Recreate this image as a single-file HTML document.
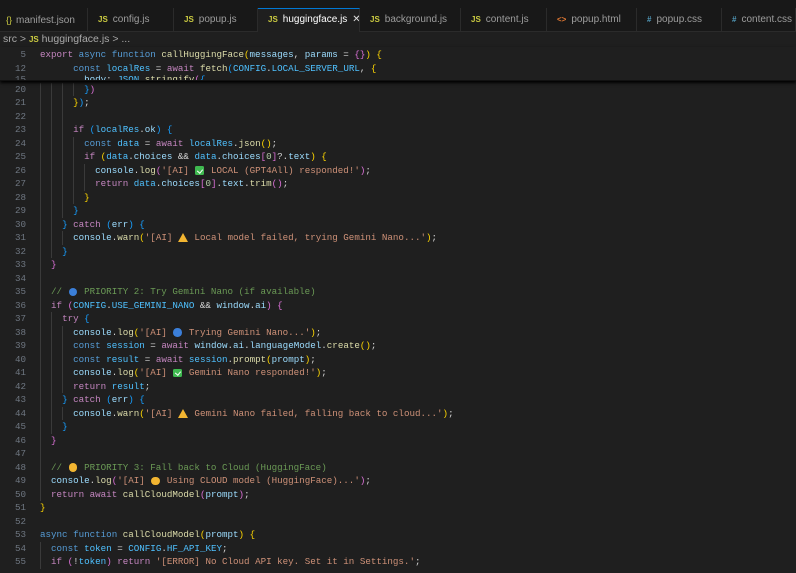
<!DOCTYPE html>
<html><head><meta charset="utf-8"><style>
*{margin:0;padding:0;box-sizing:border-box}
body{width:796px;height:573px;background:#1f1f1f;overflow:hidden;position:relative;font-family:"Liberation Sans",sans-serif}
.top{position:absolute;left:0;top:0;width:796px;height:8px;background:#181818}
.tabs{position:absolute;left:0;top:8px;width:796px;height:24px;background:#181818;border-bottom:1px solid #2b2b2b}
.tab{position:absolute;top:0;height:24px;border-right:1px solid #2b2b2b;color:#9d9d9d;font-size:10px;line-height:24px;padding-left:6px;white-space:nowrap;overflow:hidden}
.tab.act{background:#1f1f1f;color:#fff;border-top:1px solid #0078d4;line-height:22px}
.ic{font-weight:bold;font-size:8px;margin-right:5px}
.js{color:#cbcb41}.css{color:#519aba}.htm{color:#e37933}
.bc{position:absolute;left:0;top:32px;height:15px;line-height:15px;font-size:10.5px;color:#a9a9a9;padding-left:3px}
.code{font-family:"Liberation Mono",monospace;font-size:9.2px;white-space:pre;color:#d4d4d4}
.ln{position:absolute;left:0;width:26px;text-align:right;color:#6e7681;font-family:"Liberation Mono",monospace;font-size:9.2px;height:13.5px;line-height:13.5px}
.l{position:absolute;left:40px;height:13.5px;line-height:13.5px}
.sticky{position:absolute;left:0;top:47px;width:796px;height:34px;background:#1f1f1f;overflow:hidden;z-index:2;box-shadow:0 2px 3px #000;border-bottom:1px solid #111}
i{display:inline-block;width:11.04px;height:13.5px;vertical-align:top;border-left:1px solid #3a3a3a;font-style:normal}
.k{color:#569cd6}.c{color:#c586c0}.f{color:#dcdcaa}.v{color:#9cdcfe}.s{color:#ce9178}.cm{color:#6a9955}.C{color:#4fc1ff}.n{color:#b5cea8}
.b1{color:#ffd700}.b2{color:#da70d6}.b3{color:#179fff}
.e{display:inline-block;width:11.04px;height:13.5px;vertical-align:top;position:relative}
.e::after{content:"";position:absolute;left:1px;top:2.5px;width:8.5px;height:8.5px;border-radius:50%}
.bl::after{background:#3b7fd9}.yl::after{background:#f2b531}
.gr::after{background:#3fb950;border-radius:1.5px}
.gr::before{content:"";position:absolute;left:3.5px;top:4px;width:2.5px;height:4px;border:solid #fff;border-width:0 1.3px 1.3px 0;transform:rotate(40deg);z-index:1}
.wr::after{width:0;height:0;border-radius:0;border-left:5px solid transparent;border-right:5px solid transparent;border-bottom:9px solid #f2b531;left:0;top:2px}
</style></head><body>
<div class="top"></div>
<div class="tabs">
<div class="tab" style="left:0;width:88px"><span style="color:#cbcb41;font-size:9px;margin-right:4px">{}</span>manifest.json</div>
<div class="tab" style="left:88px;width:86px;padding-left:10px"><span class="ic js">JS</span>config.js</div>
<div class="tab" style="left:174px;width:84px;padding-left:10px"><span class="ic js">JS</span>popup.js</div>
<div class="tab act" style="left:258px;width:102px;padding-left:10px"><span class="ic js">JS</span>huggingface.js<span style="margin-left:5px;color:#ddd">✕</span></div>
<div class="tab" style="left:360px;width:101px;padding-left:10px"><span class="ic js">JS</span>background.js</div>
<div class="tab" style="left:461px;width:86px;padding-left:10px"><span class="ic js">JS</span>content.js</div>
<div class="tab" style="left:547px;width:90px;padding-left:10px"><span class="ic htm">&lt;&gt;</span>popup.html</div>
<div class="tab" style="left:637px;width:85px;padding-left:10px"><span class="ic css">#</span>popup.css</div>
<div class="tab" style="left:722px;width:74px;padding-left:10px"><span class="ic css">#</span>content.css</div>
</div>
<div class="bc">src &gt; <span class="js" style="font-weight:bold;font-size:8px">JS</span> huggingface.js &gt; ...</div>

<div class="sticky">
<div class="ln" style="top:1px">5</div><div class="l code" style="top:1px"><span class="c">export</span> <span class="k">async</span> <span class="k">function</span> <span class="f">callHuggingFace</span><span class="b1">(</span><span class="v">messages</span>, <span class="v">params</span> = <span class="b2">{}</span><span class="b1">)</span> <span class="b1">{</span></div>
<div class="ln" style="top:14.5px">12</div><div class="l code" style="top:14.5px">      <span class="k">const</span> <span class="C">localRes</span> = <span class="c">await</span> <span class="f">fetch</span><span class="b3">(</span><span class="C">CONFIG</span>.<span class="C">LOCAL_SERVER_URL</span>, <span class="b1">{</span></div>
<div class="ln" style="top:26px">15</div><div class="l code" style="top:26px">        <span class="v">body</span>: <span class="C">JSON</span>.<span class="f">stringify</span><span class="b2">(</span><span class="b3">{</span></div>
</div>

<div class="code">
<div class="ln" style="top:82.5px">20</div><div class="l" style="top:82.5px"><i></i><i></i><i></i><i></i><span class="b3">}</span><span class="b2">)</span></div>
<div class="ln" style="top:96px">21</div><div class="l" style="top:96px"><i></i><i></i><i></i><span class="b1">}</span><span class="b3">)</span>;</div>
<div class="ln" style="top:109.5px">22</div><div class="l" style="top:109.5px"><i></i><i></i><i></i></div>
<div class="ln" style="top:123px">23</div><div class="l" style="top:123px"><i></i><i></i><i></i><span class="c">if</span> <span class="b3">(</span><span class="C">localRes</span>.<span class="v">ok</span><span class="b3">)</span> <span class="b3">{</span></div>
<div class="ln" style="top:136.5px">24</div><div class="l" style="top:136.5px"><i></i><i></i><i></i><i></i><span class="k">const</span> <span class="C">data</span> = <span class="c">await</span> <span class="C">localRes</span>.<span class="f">json</span><span class="b1">()</span>;</div>
<div class="ln" style="top:150px">25</div><div class="l" style="top:150px"><i></i><i></i><i></i><i></i><span class="c">if</span> <span class="b1">(</span><span class="C">data</span>.<span class="v">choices</span> &amp;&amp; <span class="C">data</span>.<span class="v">choices</span><span class="b2">[</span><span class="n">0</span><span class="b2">]</span>?.<span class="v">text</span><span class="b1">)</span> <span class="b1">{</span></div>
<div class="ln" style="top:163.5px">26</div><div class="l" style="top:163.5px"><i></i><i></i><i></i><i></i><i></i><span class="v">console</span>.<span class="f">log</span><span class="b2">(</span><span class="s">'[AI] <span class="e gr"></span> LOCAL (GPT4All) responded!'</span><span class="b2">)</span>;</div>
<div class="ln" style="top:177px">27</div><div class="l" style="top:177px"><i></i><i></i><i></i><i></i><i></i><span class="c">return</span> <span class="C">data</span>.<span class="v">choices</span><span class="b2">[</span><span class="n">0</span><span class="b2">]</span>.<span class="v">text</span>.<span class="f">trim</span><span class="b2">()</span>;</div>
<div class="ln" style="top:190.5px">28</div><div class="l" style="top:190.5px"><i></i><i></i><i></i><i></i><span class="b1">}</span></div>
<div class="ln" style="top:204px">29</div><div class="l" style="top:204px"><i></i><i></i><i></i><span class="b3">}</span></div>
<div class="ln" style="top:217.5px">30</div><div class="l" style="top:217.5px"><i></i><i></i><span class="b3">}</span> <span class="c">catch</span> <span class="b3">(</span><span class="v">err</span><span class="b3">)</span> <span class="b3">{</span></div>
<div class="ln" style="top:231px">31</div><div class="l" style="top:231px"><i></i><i></i><i></i><span class="v">console</span>.<span class="f">warn</span><span class="b1">(</span><span class="s">'[AI] <span class="e wr"></span> Local model failed, trying Gemini Nano...'</span><span class="b1">)</span>;</div>
<div class="ln" style="top:244.5px">32</div><div class="l" style="top:244.5px"><i></i><i></i><span class="b3">}</span></div>
<div class="ln" style="top:258px">33</div><div class="l" style="top:258px"><i></i><span class="b2">}</span></div>
<div class="ln" style="top:271.5px">34</div><div class="l" style="top:271.5px"><i></i></div>
<div class="ln" style="top:285px">35</div><div class="l" style="top:285px"><i></i><span class="cm">// <span class="e bl"></span> PRIORITY 2: Try Gemini Nano (if available)</span></div>
<div class="ln" style="top:298.5px">36</div><div class="l" style="top:298.5px"><i></i><span class="c">if</span> <span class="b2">(</span><span class="C">CONFIG</span>.<span class="C">USE_GEMINI_NANO</span> &amp;&amp; <span class="v">window</span>.<span class="v">ai</span><span class="b2">)</span> <span class="b2">{</span></div>
<div class="ln" style="top:312px">37</div><div class="l" style="top:312px"><i></i><i></i><span class="c">try</span> <span class="b3">{</span></div>
<div class="ln" style="top:325.5px">38</div><div class="l" style="top:325.5px"><i></i><i></i><i></i><span class="v">console</span>.<span class="f">log</span><span class="b1">(</span><span class="s">'[AI] <span class="e bl"></span> Trying Gemini Nano...'</span><span class="b1">)</span>;</div>
<div class="ln" style="top:339px">39</div><div class="l" style="top:339px"><i></i><i></i><i></i><span class="k">const</span> <span class="C">session</span> = <span class="c">await</span> <span class="v">window</span>.<span class="v">ai</span>.<span class="v">languageModel</span>.<span class="f">create</span><span class="b1">()</span>;</div>
<div class="ln" style="top:352.5px">40</div><div class="l" style="top:352.5px"><i></i><i></i><i></i><span class="k">const</span> <span class="C">result</span> = <span class="c">await</span> <span class="C">session</span>.<span class="f">prompt</span><span class="b1">(</span><span class="v">prompt</span><span class="b1">)</span>;</div>
<div class="ln" style="top:366px">41</div><div class="l" style="top:366px"><i></i><i></i><i></i><span class="v">console</span>.<span class="f">log</span><span class="b1">(</span><span class="s">'[AI] <span class="e gr"></span> Gemini Nano responded!'</span><span class="b1">)</span>;</div>
<div class="ln" style="top:379.5px">42</div><div class="l" style="top:379.5px"><i></i><i></i><i></i><span class="c">return</span> <span class="C">result</span>;</div>
<div class="ln" style="top:393px">43</div><div class="l" style="top:393px"><i></i><i></i><span class="b3">}</span> <span class="c">catch</span> <span class="b3">(</span><span class="v">err</span><span class="b3">)</span> <span class="b3">{</span></div>
<div class="ln" style="top:406.5px">44</div><div class="l" style="top:406.5px"><i></i><i></i><i></i><span class="v">console</span>.<span class="f">warn</span><span class="b1">(</span><span class="s">'[AI] <span class="e wr"></span> Gemini Nano failed, falling back to cloud...'</span><span class="b1">)</span>;</div>
<div class="ln" style="top:420px">45</div><div class="l" style="top:420px"><i></i><i></i><span class="b3">}</span></div>
<div class="ln" style="top:433.5px">46</div><div class="l" style="top:433.5px"><i></i><span class="b2">}</span></div>
<div class="ln" style="top:447px">47</div><div class="l" style="top:447px"><i></i></div>
<div class="ln" style="top:460.5px">48</div><div class="l" style="top:460.5px"><i></i><span class="cm">// <span class="e yl"></span> PRIORITY 3: Fall back to Cloud (HuggingFace)</span></div>
<div class="ln" style="top:474px">49</div><div class="l" style="top:474px"><i></i><span class="v">console</span>.<span class="f">log</span><span class="b2">(</span><span class="s">'[AI] <span class="e yl"></span> Using CLOUD model (HuggingFace)...'</span><span class="b2">)</span>;</div>
<div class="ln" style="top:487.5px">50</div><div class="l" style="top:487.5px"><i></i><span class="c">return</span> <span class="c">await</span> <span class="f">callCloudModel</span><span class="b2">(</span><span class="v">prompt</span><span class="b2">)</span>;</div>
<div class="ln" style="top:501px">51</div><div class="l" style="top:501px"><span class="b1">}</span></div>
<div class="ln" style="top:514.5px">52</div><div class="l" style="top:514.5px"></div>
<div class="ln" style="top:528px">53</div><div class="l" style="top:528px"><span class="k">async</span> <span class="k">function</span> <span class="f">callCloudModel</span><span class="b1">(</span><span class="v">prompt</span><span class="b1">)</span> <span class="b1">{</span></div>
<div class="ln" style="top:541.5px">54</div><div class="l" style="top:541.5px"><i></i><span class="k">const</span> <span class="C">token</span> = <span class="C">CONFIG</span>.<span class="C">HF_API_KEY</span>;</div>
<div class="ln" style="top:555px">55</div><div class="l" style="top:555px"><i></i><span class="c">if</span> <span class="b2">(</span>!<span class="C">token</span><span class="b2">)</span> <span class="c">return</span> <span class="s">'[ERROR] No Cloud API key. Set it in Settings.'</span>;</div>
</div>
</body></html>
